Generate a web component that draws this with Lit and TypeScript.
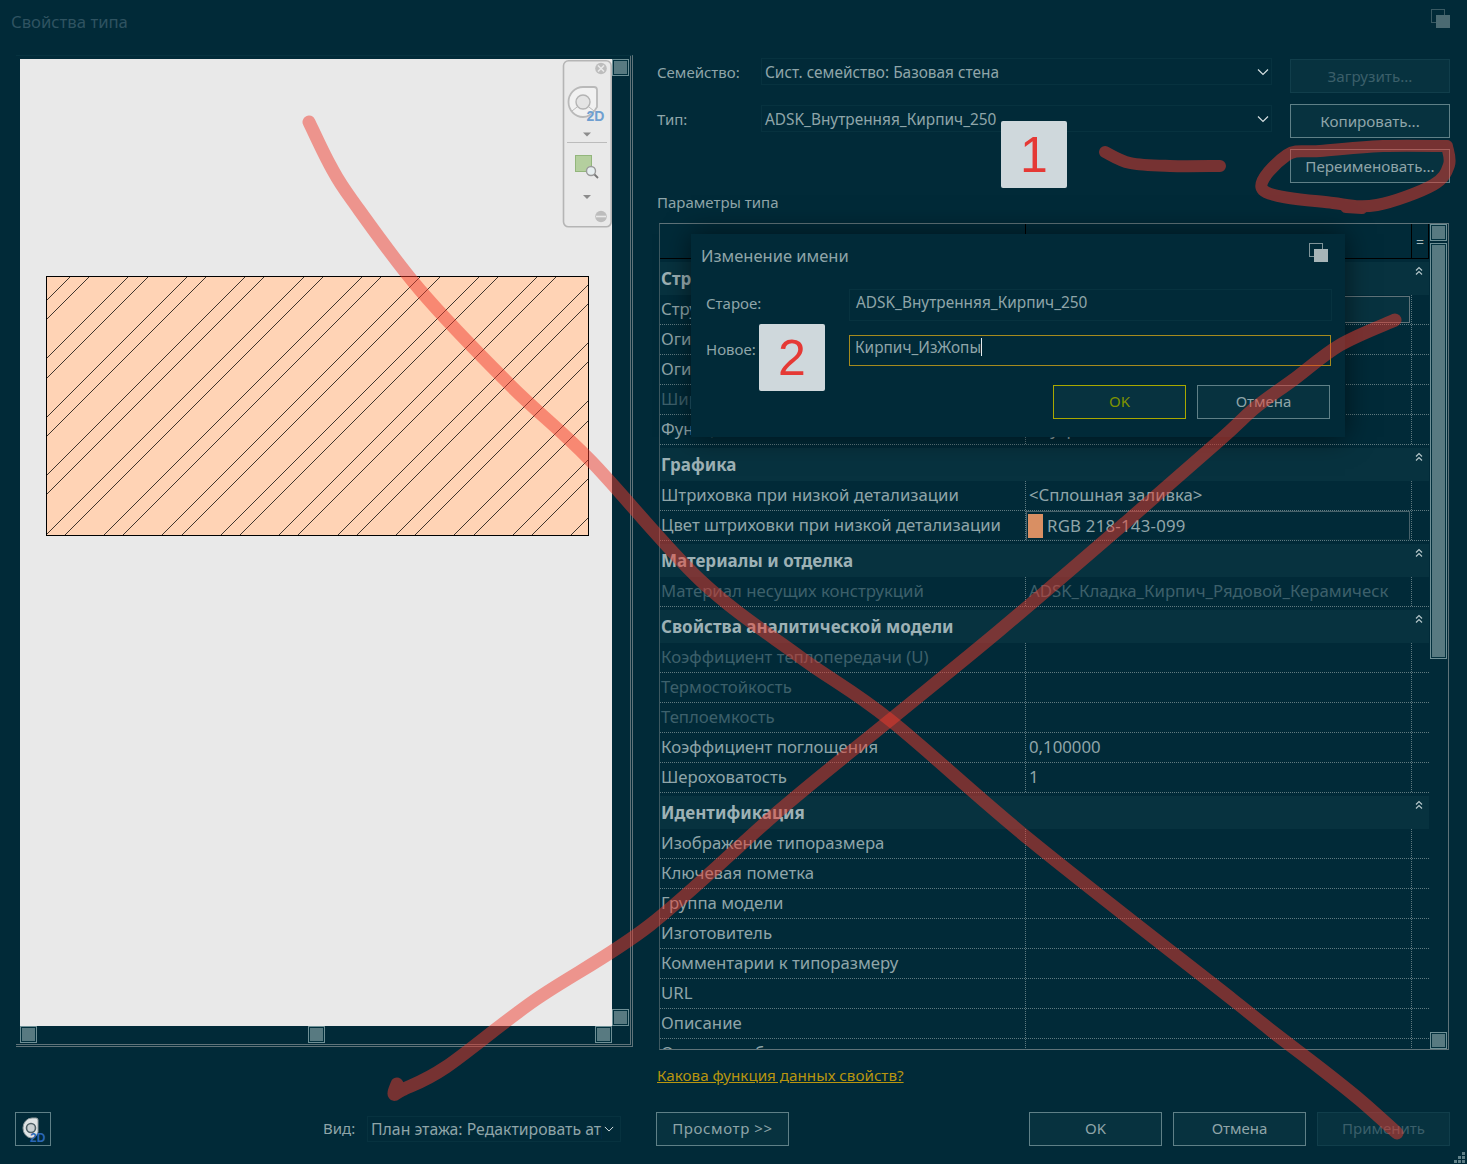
import { LitElement, html, css, svg } from 'lit';
import { customElement } from 'lit/decorators.js';

type Row = { name: string; value?: string; off?: boolean; kind?: 'field' | 'color' };
type Section = { title: string; rows: Row[] };
type Pt = [number, number];

const sections: Section[] = [
  {
    title: 'Строительство',
    rows: [
      { name: 'Структура', value: 'Изменить...', kind: 'field' },
      { name: 'Огибание в тупиках', value: 'Нет' },
      { name: 'Огибание во вставках', value: 'Не выполнять огибание' },
      { name: 'Ширина', value: '250,0', off: true },
      { name: 'Функция', value: 'Внутренние' },
    ],
  },
  {
    title: 'Графика',
    rows: [
      { name: 'Штриховка при низкой детализации', value: '<Сплошная заливка>' },
      { name: 'Цвет штриховки при низкой детализации', value: 'RGB 218-143-099', kind: 'color' },
    ],
  },
  {
    title: 'Материалы и отделка',
    rows: [
      { name: 'Материал несущих конструкций', value: 'ADSK_Кладка_Кирпич_Рядовой_Керамическ', off: true },
    ],
  },
  {
    title: 'Свойства аналитической модели',
    rows: [
      { name: 'Коэффициент теплопередачи (U)', off: true },
      { name: 'Термостойкость', off: true },
      { name: 'Теплоемкость', off: true },
      { name: 'Коэффициент поглощения', value: '0,100000' },
      { name: 'Шероховатость', value: '1' },
    ],
  },
  {
    title: 'Идентификация',
    rows: [
      { name: 'Изображение типоразмера' },
      { name: 'Ключевая пометка' },
      { name: 'Группа модели' },
      { name: 'Изготовитель' },
      { name: 'Комментарии к типоразмеру' },
      { name: 'URL' },
      { name: 'Описание' },
      { name: 'Описание сборки' },
    ],
  },
];

// hatch offsets (x + y) of the paired lines in the wall section
const hatchOffsets: number[] = [];
for (let c = 347 - 58.4; c < 1200; c += 58.4) {
  hatchOffsets.push(Math.round(c), Math.round(c + 19.2));
}

// pen strokes, smoothed through the sampled points
function smooth(pts: Pt[]) {
  let d = `M${pts[0][0]} ${pts[0][1]}`;
  for (let i = 0; i < pts.length - 1; i++) {
    const p0 = pts[Math.max(i - 1, 0)];
    const p1 = pts[i];
    const p2 = pts[i + 1];
    const p3 = pts[Math.min(i + 2, pts.length - 1)];
    const c1x = p1[0] + (p2[0] - p0[0]) / 6;
    const c1y = p1[1] + (p2[1] - p0[1]) / 6;
    const c2x = p2[0] - (p3[0] - p1[0]) / 6;
    const c2y = p2[1] - (p3[1] - p1[1]) / 6;
    d += ` C${c1x.toFixed(1)} ${c1y.toFixed(1)} ${c2x.toFixed(1)} ${c2y.toFixed(1)} ${p2[0]} ${p2[1]}`;
  }
  return d;
}

const strokeA = smooth([
  [309, 122], [330, 165], [352, 200], [420, 290], [510, 385], [590, 460], [700, 580], [800, 657], [890, 720],
  [1030, 840], [1233, 1000], [1273, 1032], [1320, 1068], [1360, 1100], [1397, 1133],
]);
const strokeB = smooth([
  [1395, 320], [1340, 345], [1293, 380], [1256, 407], [1220, 440], [1125, 523], [1000, 630], [890, 720], [780, 810],
  [650, 925], [535, 1000], [446, 1067], [402, 1090], [394, 1094], [397, 1084],
]);
const strokeC = smooth([[1105, 152], [1130, 163], [1170, 166], [1220, 166]]);
const strokeD =
  smooth([
    [1447, 146], [1383, 146], [1320, 151], [1287, 155], [1263, 190], [1333, 203], [1377, 205], [1433, 185], [1449, 165], [1447, 146],
  ]) + ' M1346 207 L1362 208';

const chevron = html`<svg class="chev" width="12" height="8" viewBox="0 0 12 8"><path d="M1 1.5 6 6.5 11 1.5" fill="none" stroke="#d5dfe1" stroke-width="1.2"/></svg>`;

const restore = (fill: string, line: string) => html`<svg class="restore" width="19" height="19" viewBox="0 0 19 19"><rect x="0.5" y="0.5" width="13" height="13" fill="none" stroke="${line}"/><rect x="5" y="6" width="14" height="13" fill="${fill}"/></svg>`;

const collapse = html`<svg class="collapse" width="8" height="10" viewBox="0 0 8 10"><path d="M1 4.5 4 1.5 7 4.5M1 8.5 4 5.5 7 8.5" fill="none" stroke="#b4c6c9" stroke-width="1.2"/></svg>`;

@customElement('app-root')
export class AppRoot extends LitElement {
  static styles = css`
    :host {
      display: block;
      width: 1467px;
      height: 1164px;
      background: #012a38;
      color: #8fa5a9;
      font-family: 'Noto Sans', 'Liberation Sans', sans-serif;
      font-size: 15px;
      position: relative;
      overflow: hidden;
    }

    .title-bar {
      height: 44px;
      padding: 0 17px 2px 11px;
      box-sizing: border-box;
      display: flex;
      align-items: center;
      justify-content: space-between;
      color: #2f5361;
      font-size: 16.7px;
    }
    .title-bar .restore { margin-top: -5px; }

    .body {
      height: 1056px;
      padding: 11px 0 0 16px;
      box-sizing: border-box;
      display: flex;
      gap: 24px;
    }

    /* preview pane */
    .preview {
      width: 617px;
      height: 992px;
      box-sizing: border-box;
      border-top: 1px solid #06323f;
      border-right: 3px double #5f7379;
      border-bottom: 3px double #5f7379;
      padding: 3px 0 0 4px;
      display: grid;
      grid-template-columns: 592px 18px;
      grid-template-rows: 967px 18px;
      position: relative;
    }
    .canvas {
      background: #e9e9e9;
      padding: 217px 0 0 26px;
      box-sizing: border-box;
    }
    .canvas svg { display: block; }
    .vbar {
      display: flex;
      flex-direction: column;
      justify-content: space-between;
    }
    .hbar {
      grid-column: 1 / 3;
      display: flex;
      justify-content: space-between;
      padding-right: 18px;
    }
    .thumb {
      width: 17px;
      height: 17px;
      box-sizing: border-box;
      background: #587a81;
      border: 1px solid #6f9096;
      box-shadow: inset 0 0 0 1px #02303d;
    }
    .wheel {
      position: absolute;
      left: 546px;
      top: 4px;
      width: 50px;
      height: 168px;
    }

    /* right pane */
    .props {
      width: 793px;
      padding-top: 3px;
    }
    .top {
      display: grid;
      grid-template-columns: 633px 160px;
    }
    .fields {
      display: flex;
      flex-direction: column;
      gap: 20px;
    }
    .field-row {
      display: flex;
      align-items: center;
    }
    .field-row label { width: 104px; }
    .combo {
      height: 27px;
      box-sizing: border-box;
      border: 1px solid #07323f;
      padding: 0 4px 0 3px;
      display: flex;
      align-items: center;
      justify-content: space-between;
      white-space: nowrap;
      overflow: hidden;
    }
    .field-row .combo { width: 511px; font-size: 15.4px; padding-top: 2px; }
    .field-row .combo .chev { flex: none; margin: -2px -2px 0 0; }
    .actions {
      display: flex;
      flex-direction: column;
      gap: 11px;
      padding-top: 1px;
    }
    .btn {
      height: 34px;
      box-sizing: border-box;
      border: 1px solid #5f8087;
      background: #07323f;
      display: flex;
      align-items: center;
      justify-content: center;
      white-space: nowrap;
      padding-bottom: 2px;
    }
    .actions .btn { font-size: 15.2px; padding-bottom: 1px; }
    .btn.off {
      border-color: #113e4b;
      color: #3b5f6a;
    }
    .btn.accent {
      border-color: #a8a800;
      color: #7f9200;
    }
    .caption {
      margin: 10px 0;
      height: 20px;
      line-height: 18px;
    }

    /* property table */
    .table {
      margin-left: 2px;
      width: 790px;
      height: 827px;
      box-sizing: border-box;
      border: 1px solid #5f7379;
      border-left-color: #3d5860;
      display: grid;
      grid-template-columns: 769px 19px;
      overflow: hidden;
      font-size: 16.75px;
    }
    .grid { overflow: hidden; height: 825px; }
    .head {
      height: 35px;
      box-sizing: border-box;
      border-bottom: 1px solid #000;
      display: grid;
      grid-template-columns: 365px 386px 18px;
    }
    .head div + div { border-left: 1px solid #000; }
    .head .eq {
      display: flex;
      align-items: center;
      justify-content: center;
      color: #a8b9bc;
      font-size: 14px;
      border-right: 1px solid #000;
    }
    .section {
      margin-top: 3px;
      height: 33px;
      background: #07323f;
      display: flex;
      align-items: center;
      justify-content: space-between;
      padding: 0 6px 0 1px;
      font-weight: 700;
      font-size: 17px;
      color: #9db1b5;
    }
    .section .collapse { margin-top: -16px; }
    .row {
      height: 30px;
      box-sizing: border-box;
      border-bottom: 1px dotted #5f7a80;
      display: grid;
      grid-template-columns: 365px 386px 18px;
      align-items: stretch;
    }
    .row > div {
      display: flex;
      align-items: center;
      white-space: nowrap;
      overflow: hidden;
    }
    .row .name { padding: 0 0 2px 1px; }
    .row .val {
      padding: 0 0 2px 3px;
      border-left: 1px dotted #5f7a80;
    }
    .row .end { border-left: 1px dotted #5f7a80; }
    .row.off { color: #3d606b; }
    .row .val.wrap { padding: 0; }
    .row .boxed {
      border: 1px solid #5f7379;
      background: #07323f;
      flex: 1;
      align-self: stretch;
      margin: 1px 1px 1px 1px;
    }
    .row .colored {
      border: 1px solid #47616a;
      border-bottom-color: #08303c;
      flex: 1;
      align-self: stretch;
      display: flex;
      align-items: center;
      gap: 4px;
      margin-right: 1px;
      letter-spacing: 0.25px;
    }
    .swatch {
      width: 15px;
      height: 24px;
      background: #d98f63;
      margin-left: 1px;
    }
    .scroll {
      padding: 0 0 0 1px;
      display: flex;
      flex-direction: column;
      gap: 2px;
    }
    .scroll .arrow,
    .scroll .bar {
      width: 17px;
      box-sizing: border-box;
      background: #587a81;
      border: 1px solid #6f9096;
      box-shadow: inset 0 0 0 1px #02303d;
      flex: none;
    }
    .scroll .arrow { height: 17px; }
    .scroll .bar { height: 416px; }
    .scroll .gap { flex: 1; }
    .link {
      display: block;
      margin-top: 14px;
      height: 22px;
      line-height: 22px;
      font-size: 15.2px;
      color: #b8950f;
      text-decoration: underline;
    }

    /* footer */
    .footer {
      height: 34px;
      margin-top: 12px;
      padding: 0 17px 0 15px;
      display: flex;
      align-items: center;
    }
    .icon-btn {
      width: 36px;
      height: 34px;
      box-sizing: border-box;
      border: 1px solid #5f8087;
      display: flex;
      align-items: center;
      justify-content: center;
      flex: none;
    }
    .view-label { margin-left: 272px; width: 44px; flex: none; margin-top: -3px; }
    .footer .combo { width: 254px; height: 26px; flex: none; font-size: 15.8px; }
    .footer .combo span { width: 231px; overflow: hidden; }
    .footer .combo .chev { width: 10px; flex: none; margin-right: 2px; }
    .footer .btn { width: 133px; flex: none; }
    .preview-btn { margin-left: 35px; letter-spacing: 0.6px; }
    .footer .spacer { flex: 1; }
    .footer .btn + .btn { margin-left: 11px; }
    .grip {
      position: absolute;
      right: 1px;
      bottom: 1px;
    }

    /* rename dialog, sits over the table */
    .dialog {
      position: absolute;
      left: 691px;
      top: 234px;
      width: 654px;
      height: 203px;
      box-sizing: border-box;
      background: #012a38;
      box-shadow: 0 0 26px rgba(0, 0, 0, 0.55);
      padding: 0 13px 0 15px;
    }
    .dlg-title {
      height: 44px;
      margin-left: -5px;
      box-sizing: border-box;
      padding: 0 4px 2px 0;
      display: flex;
      align-items: center;
      justify-content: space-between;
      font-size: 16.5px;
    }
    .dlg-title .restore { margin-top: -5px; }
    .dlg-row {
      display: grid;
      grid-template-columns: 143px 1fr;
      align-items: center;
    }
    .dlg-row > span { margin-top: -4px; }
    .dlg-row.first { margin: 11px 0 14px; }
    .dlg-old,
    .dlg-new {
      box-sizing: border-box;
      display: flex;
      align-items: center;
      font-size: 15.4px;
    }
    .dlg-old {
      height: 32px;
      border: 1px solid #07323f;
      padding: 0 6px 6px;
    }
    .dlg-new {
      height: 31px;
      border: 1px solid #a58a1e;
      padding: 0 5px 7px;
      margin-right: 1px;
    }
    .caret {
      width: 1px;
      height: 18px;
      background: #e4ecee;
    }
    .dlg-actions {
      display: flex;
      justify-content: flex-end;
      gap: 11px;
      margin-top: 19px;
      padding-right: 2px;
    }
    .dlg-actions .btn { width: 133px; }

    /* annotations pasted over the screenshot */
    .badge {
      position: absolute;
      width: 66px;
      height: 67px;
      background: #cfd8dc;
      border-radius: 2px;
      color: #e53935;
      font-family: 'Liberation Sans', sans-serif;
      font-size: 50px;
      display: flex;
      align-items: center;
      justify-content: center;
    }
    .ink {
      position: absolute;
      left: 0;
      top: 0;
      pointer-events: none;
    }
    .ink path {
      fill: none;
      stroke: rgb(240, 59, 44);
      stroke-opacity: 0.49;
      stroke-linecap: round;
      stroke-linejoin: round;
    }
  `;

  renderRow(r: Row) {
    let val = html`<div class="val">${r.value ?? ''}</div>`;
    if (r.kind === 'field') val = html`<div class="val wrap"><div class="boxed"></div></div>`;
    if (r.kind === 'color') val = html`<div class="val wrap"><div class="colored"><div class="swatch"></div>${r.value}</div></div>`;
    return html`
      <div class="row ${r.off ? 'off' : ''}">
        <div class="name">${r.name}</div>
        ${val}
        <div class="end"></div>
      </div>
    `;
  }

  renderHatch() {
    return html`
      <svg width="543" height="260" viewBox="46 276 543 260">
        <defs><clipPath id="wall"><rect x="46" y="276" width="543" height="260"/></clipPath></defs>
        <rect x="46" y="276" width="543" height="260" fill="#ffd3b5"/>
        <g clip-path="url(#wall)" stroke="#000" stroke-width="0.75" shape-rendering="crispEdges">
          ${hatchOffsets.map((c) => svg`<line x1="${c - 276}" y1="276" x2="${c - 536}" y2="536"/>`)}
        </g>
        <rect x="46.5" y="276.5" width="542" height="259" fill="none" stroke="#000"/>
      </svg>
    `;
  }

  renderWheel() {
    return html`
      <svg class="wheel" viewBox="0 0 50 168">
        <rect x="1.5" y="0.8" width="47.7" height="166" rx="5" fill="#e9e9e9" stroke="#b5b5b5" stroke-width="1.6"/>
        <circle cx="39" cy="8.5" r="5.8" fill="#bdbdbd"/>
        <path d="M36 5.5l6 6M42 5.5l-6 6" stroke="#e9e9e9" stroke-width="1.6"/>
        <path d="M21 27h11q3 0 3 3v17l-2 3q-5 7-12 7A14.5 15 0 0 1 21 27z" fill="#f1f1f1" stroke="#b9b9b9" stroke-width="1.8"/>
        <circle cx="21" cy="42" r="7" fill="#e4e4e4" stroke="#b3b3b3" stroke-width="1.4"/>
        <path d="M10 51l5-4M27 47l5 4" stroke="#b9b9b9"/>
        <text x="24.5" y="61" font-family="Liberation Sans, sans-serif" font-size="14" font-weight="700" fill="#6f9fd0">2D</text>
        <path d="M21 72.5h8l-4 4z" fill="#8c8c8c"/>
        <path d="M5 82.5h40" stroke="#bcbcbc"/>
        <rect x="13.5" y="95.5" width="16" height="16" fill="#b4cf9e" stroke="#93b67c"/>
        <circle cx="29" cy="111" r="4.5" fill="#e6eef0" stroke="#9a9a9a" stroke-width="1.4"/>
        <path d="M32.5 114.5l3.5 3.5" stroke="#777" stroke-width="1.8"/>
        <path d="M21 135h8l-4 4z" fill="#8c8c8c"/>
        <circle cx="39" cy="156.5" r="5.8" fill="#bdbdbd"/>
        <path d="M34 156.5h10" stroke="#e9e9e9" stroke-width="1.6"/>
      </svg>
    `;
  }

  render() {
    return html`
      <div class="title-bar">
        <span>Свойства типа</span>
        ${restore('#4b6a72', '#3a5a63')}
      </div>

      <div class="body">
        <div class="preview">
          <div class="canvas">${this.renderHatch()}</div>
          <div class="vbar"><div class="thumb"></div><div class="thumb"></div></div>
          <div class="hbar"><div class="thumb"></div><div class="thumb"></div><div class="thumb"></div></div>
          ${this.renderWheel()}
        </div>

        <div class="props">
          <div class="top">
            <div class="fields">
              <div class="field-row"><label>Семейство:</label><div class="combo">Сист. семейство: Базовая стена ${chevron}</div></div>
              <div class="field-row"><label>Тип:</label><div class="combo">ADSK_Внутренняя_Кирпич_250 ${chevron}</div></div>
            </div>
            <div class="actions">
              <div class="btn off">Загрузить...</div>
              <div class="btn">Копировать...</div>
              <div class="btn">Переименовать...</div>
            </div>
          </div>
          <div class="caption">Параметры типа</div>
          <div class="table">
            <div class="grid">
              <div class="head"><div></div><div></div><div class="eq">=</div></div>
              ${sections.map(
                (s) => html`
                  <div class="section"><span>${s.title}</span>${collapse}</div>
                  ${s.rows.map((r) => this.renderRow(r))}
                `
              )}
            </div>
            <div class="scroll">
              <div class="arrow"></div>
              <div class="bar"></div>
              <div class="gap"></div>
              <div class="arrow"></div>
            </div>
          </div>
          <a class="link">Какова функция данных свойств?</a>
        </div>
      </div>

      <div class="footer">
        <div class="icon-btn">
          <svg width="30" height="30" viewBox="0 0 30 30">
            <path d="M5 14a9 10 0 0 1 9-10h4q2 0 2 2v12q-2 6-7 6a9 10 0 0 1-8-10z" fill="#dfe4e5" stroke="#8f9a9d"/>
            <circle cx="13" cy="14" r="4.5" fill="#c9d0d2" stroke="#4f6066" stroke-width="1.6"/>
            <text x="12" y="28" font-family="Liberation Sans, sans-serif" font-size="12" font-weight="700" fill="#2a67b5">2D</text>
          </svg>
        </div>
        <div class="view-label">Вид:</div>
        <div class="combo"><span>План этажа: Редактировать атрибуты</span>${chevron}</div>
        <div class="btn preview-btn">Просмотр &gt;&gt;</div>
        <div class="spacer"></div>
        <div class="btn">OK</div>
        <div class="btn">Отмена</div>
        <div class="btn off">Применить</div>
      </div>

      <svg class="grip" width="12" height="11" viewBox="0 0 12 11" fill="#5f7f87">
        <rect x="8" y="0" width="3" height="3"/><rect x="4" y="4" width="3" height="3"/><rect x="8" y="4" width="3" height="3"/>
        <rect x="0" y="8" width="3" height="3"/><rect x="4" y="8" width="3" height="3"/><rect x="8" y="8" width="3" height="3"/>
      </svg>

      <div class="dialog">
        <div class="dlg-title"><span>Изменение имени</span>${restore('#a7b5b8', '#7f9499')}</div>
        <div class="dlg-row first"><span>Старое:</span><div class="dlg-old">ADSK_Внутренняя_Кирпич_250</div></div>
        <div class="dlg-row"><span>Новое:</span><div class="dlg-new">Кирпич_ИзЖопы<span class="caret"></span></div></div>
        <div class="dlg-actions">
          <div class="btn accent">OK</div>
          <div class="btn">Отмена</div>
        </div>
      </div>

      <div class="badge" style="left:1001px;top:121px">1</div>
      <div class="badge" style="left:759px;top:324px">2</div>

      <svg class="ink" width="1467" height="1164" viewBox="0 0 1467 1164">
        <path stroke-width="13" d="${strokeA}"/>
        <path stroke-width="13" d="${strokeB}"/>
        <path stroke-width="12" d="${strokeC}"/>
        <path stroke-width="12" d="${strokeD}"/>
      </svg>
    `;
  }
}
